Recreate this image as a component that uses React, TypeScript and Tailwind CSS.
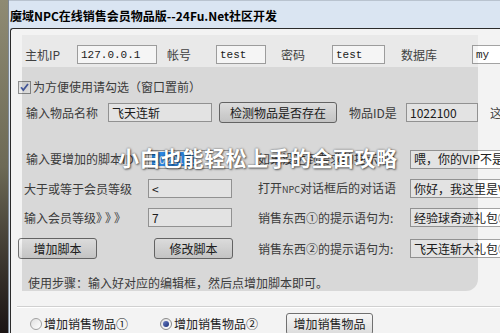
import React from "react";

const font = { fontFamily: '"Noto Sans CJK SC", "Noto Sans", sans-serif' };

function Input({ w, children, mono, className = "" }: { w: string; children?: React.ReactNode; mono?: boolean; className?: string }) {
  return (
    <div
      className={`${w} h-[19px] shrink-0 bg-white border border-[#a3a3a3] flex items-center pl-[3px] text-[12px] leading-[14px] text-[#222] overflow-hidden whitespace-nowrap ${className}`}
      style={mono ? { fontFamily: '"Liberation Mono", monospace', fontSize: 11 } : undefined}
    >
      {children}
    </div>
  );
}

function Btn({ w, children, h = "h-[21px]" }: { w: string; children: React.ReactNode; h?: string }) {
  return (
    <div className={`${w} ${h} shrink-0 rounded-[3px] border border-[#707070] bg-gradient-to-b from-[#f7f7f7] to-[#dcdcdc] flex items-center justify-center text-[12px] text-[#222]`}>
      {children}
    </div>
  );
}

function Label({ w, children, className = "" }: { w: string; children: React.ReactNode; className?: string }) {
  return <div className={`${w} shrink-0 text-[12px] leading-[14px] text-[#444] whitespace-nowrap ${className}`}>{children}</div>;
}

export default function App() {
  return (
    <div className="w-[500px] h-[333px] flex overflow-hidden bg-[#f3f3f3]" style={font}>
      <div className="w-[8px] shrink-0 bg-gradient-to-b from-[#8f8b73] via-[#6d6a56] via-50% to-[#1b1414]" />
      <div className="flex-1 flex flex-col bg-[#dae5f2] border-l border-[#7d8793] min-w-0">
        <div className="h-[28px] shrink-0 flex items-center pl-[1px] pt-[2px] border-t border-[#b9c3cf]">
          <span className="text-[12px] font-bold text-black whitespace-nowrap">魔域NPC在线销售会员物品版--24Fu.Net社区开发</span>
        </div>
        <div className="flex-1 relative ml-[1px] border-l border-t border-[#2b2b2b] rounded-tl-[3px] bg-[#f3f3f3] flex flex-col min-w-0">
          {/* Row 1 */}
          <div className="flex items-center mt-[16px] pl-[14px]">
            <Label w="w-[52px]">主机IP</Label>
            <Input w="w-[80px]" mono>127.0.0.1</Input>
            <Label w="w-[49px]" className="ml-[10px]">帐号</Label>
            <Input w="w-[50px]" mono>test</Input>
            <Label w="w-[51px]" className="ml-[15px]">密码</Label>
            <Input w="w-[53px]" mono>test</Input>
            <Label w="w-[71px]" className="ml-[16px]">数据库</Label>
            <Input w="w-[60px]" mono>my</Input>
          </div>
          {/* Row 2 checkbox */}
          <div className="flex items-center mt-[16px] pl-[7px] h-[14px]">
            <div className="w-[13px] h-[13px] border border-[#8e8f8f] bg-gradient-to-br from-[#dcdcdc] to-[#fafafa] flex items-center justify-center">
              <svg width="11" height="11" viewBox="0 0 11 11">
                <path d="M2 5.2 L4.3 8 L9 2" stroke="#4a5fa8" strokeWidth="1.8" fill="none" />
              </svg>
            </div>
            <Label w="w-auto" className="ml-[2px]">为方便使用请勾选（窗口置前）</Label>
          </div>
          {/* Row 3 */}
          <div className="flex items-center mt-[8px] pl-[15px] h-[21px]">
            <Label w="w-[82px]">输入物品名称</Label>
            <Input w="w-[104px]">飞天连斩</Input>
            <div className="ml-[7px]">
              <Btn w="w-[118px]">检测物品是否存在</Btn>
            </div>
            <Label w="w-[57px]" className="ml-[12px]">物品ID是</Label>
            <Input w="w-[72px]" className="text-[11px]">1022100</Input>
            <Label w="w-[20px]" className="ml-[12px]">这</Label>
          </div>
          {/* Two-column rows */}
          <div className="flex items-center mt-[26px] pl-[15px] h-[20px]">
            <Label w="w-[122px]">输入要增加的脚本ID</Label>
            <Input w="w-[84px]">
              <span className="bg-[#3399ff] text-white text-[11px] px-[1px]">1022100</span>
            </Input>
            <Label w="w-[152px]" className="ml-[26px]">如果没达到要求的提示语：</Label>
            <Input w="w-[100px]">喂，你的VIP不是</Input>
          </div>
          <div className="flex items-center mt-[10px] pl-[13px] h-[19px]">
            <Label w="w-[124px]">大于或等于会员等级</Label>
            <Input w="w-[84px]">&lt;</Input>
            <Label w="w-[152px]" className="ml-[26px]">打开<span className="text-[9px]">NPC</span>对话框后的对话语</Label>
            <Input w="w-[100px]">你好，我这里是V</Input>
          </div>
          <div className="flex items-center mt-[10px] pl-[13px] h-[19px]">
            <Label w="w-[124px]">输入会员等级<span className="tracking-[3px]">》》》</span></Label>
            <Input w="w-[84px]">7</Input>
            <Label w="w-[152px]" className="ml-[26px]">销售东西①的提示语句为:</Label>
            <Input w="w-[100px]">经验球奇迹礼包①</Input>
          </div>
          <div className="flex items-center mt-[11px] pl-[7px] h-[21px]">
            <Btn w="w-[79px]">增加脚本</Btn>
            <div className="ml-[57px]">
              <Btn w="w-[79px]">修改脚本</Btn>
            </div>
            <Label w="w-[152px]" className="ml-[25px]">销售东西②的提示语句为:</Label>
            <Input w="w-[100px]">飞天连斩大礼包②</Input>
          </div>
          {/* Usage */}
          <div className="mt-[16px] pl-[17px] h-[16px] flex items-center">
            <Label w="w-auto">使用步骤：输入好对应的编辑框，然后点增加脚本即可。</Label>
          </div>
          {/* Separator */}
          <div className="mt-[15px] border-t border-[#d0d0d0] border-b border-b-white ml-[6px]" />
          {/* Radios */}
          <div className="flex items-center mt-[5px] pl-[19px] h-[21px]">
            <div className="w-[12px] h-[12px] rounded-full border border-[#a0a0a0] bg-gradient-to-br from-[#e0e0e0] to-white" />
            <span className="ml-[2px] text-[12px] text-[#222]">增加销售物品①</span>
            <div className="ml-[32px] w-[12px] h-[12px] rounded-full border border-[#8a8a8a] bg-gradient-to-br from-[#e0e0e0] to-white flex items-center justify-center">
              <div className="w-[6px] h-[6px] rounded-full bg-gradient-to-br from-[#6c7fc4] to-[#1c2f78]" />
            </div>
            <span className="ml-[2px] text-[12px] text-[#222]">增加销售物品②</span>
            <div className="ml-[28px]">
              <Btn w="w-[87px]" h="h-[22px]">增加销售物品</Btn>
            </div>
          </div>

          {/* Overlays */}
          <div className="absolute left-[11px] top-[6px] w-[456px] h-[32px] bg-black/[0.04] pointer-events-none" />
          <div className="absolute left-[11px] top-[38px] w-[456px] h-[224px] bg-black/[0.11] rounded-br-[12px] pointer-events-none" />
          <div
            className="absolute left-[107px] top-[115px] text-[21px] leading-[26px] font-bold text-white whitespace-nowrap tracking-[0.5px] pointer-events-none"
            style={{ textShadow: "0 0 2px rgba(0,0,0,0.6), 1px 1px 2px rgba(0,0,0,0.5)" }}
          >
            小白也能轻松上手的全面攻略
          </div>
        </div>
      </div>
    </div>
  );
}
